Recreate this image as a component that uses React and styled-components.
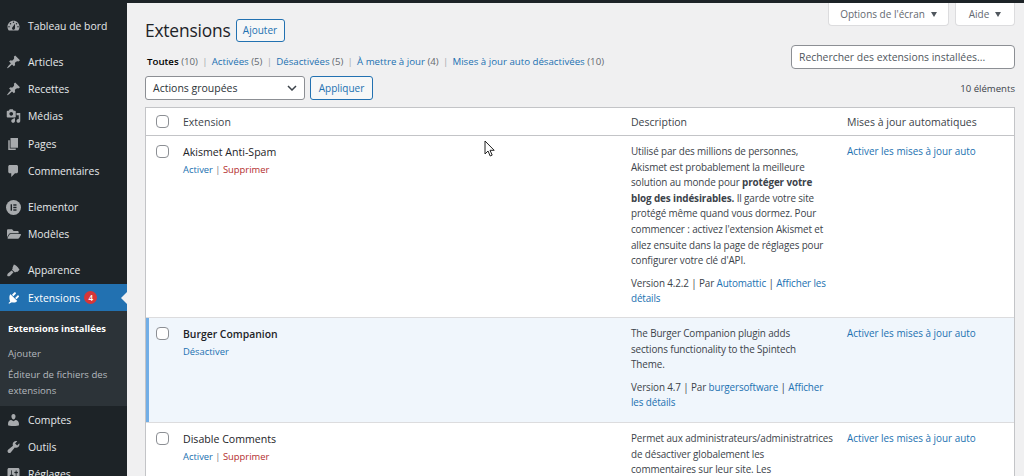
import * as React from "react"
import styled, { createGlobalStyle } from "styled-components"
import { FaFolderOpen } from "react-icons/fa"

const GlobalStyle = createGlobalStyle`
  html, body {
    margin: 0;
    padding: 0;
    height: 100%;
    overflow: hidden;
    background: #f0f0f1;
  }
  body {
    font-family: "Open Sans", "Liberation Sans", sans-serif;
    font-size: 10px;
    color: #3c434a;
  }
  * { box-sizing: border-box; }
`

const Page = styled.div`
  display: flex;
  flex-direction: column;
  height: 476px;
  width: 1024px;
  overflow: hidden;
  position: relative;
`

const TopBar = styled.div`
  height: 3px;
  flex: none;
  background: #1d2327;
`

const Body = styled.div`
  display: flex;
  flex: 1;
  min-height: 0;
`

const Sidebar = styled.nav`
  width: 127px;
  flex: none;
  background: #1d2327;
  padding-top: 9px;
  overflow: hidden;
`

const MenuItem = styled.div`
  display: flex;
  align-items: center;
  height: 27.4px;
  padding-left: 6px;
  gap: 7px;
  font-size: 10.4px;
  color: ${p => (p.$active ? "#fff" : "#e6e9eb")};
  background: ${p => (p.$active ? "#2271b1" : "transparent")};
  position: relative;
  margin-top: ${p => (p.$gap ? "8.5px" : "0")};
`

const MenuIcon = styled.span`
  width: 15px;
  height: 15px;
  flex: none;
  display: flex;
  align-items: center;
  justify-content: center;
  color: ${p => (p.$active ? "#fff" : "#a7aaad")};
`

const Badge = styled.span`
  width: 13px;
  height: 13px;
  border-radius: 50%;
  background: #d63638;
  color: #fff;
  font-size: 8px;
  font-weight: 600;
  display: flex;
  align-items: center;
  justify-content: center;
  margin-left: -3px;
`

const ActiveArrow = styled.span`
  position: absolute;
  right: 0;
  top: 50%;
  margin-top: -6px;
  border: 6px solid transparent;
  border-right-color: #f0f0f1;
  border-left: 0;
`

const Submenu = styled.div`
  background: #2c3338;
  padding: 6px 8px 6px;
  height: 94.5px;
  display: flex;
  flex-direction: column;
`

const SubItem = styled.div`
  font-size: ${p => (p.$current ? 9.4 : 9.6)}px;
  line-height: 15.5px;
  padding: ${p => (p.$current ? "4px 0 6px" : "3px 0 3px")};
  color: ${p => (p.$current ? "#fff" : "#b4b9be")};
  font-weight: ${p => (p.$current ? 700 : 400)};
`

const Main = styled.main`
  flex: 1;
  min-width: 0;
  padding: 0 9px 0 18px;
  position: relative;
`

const ScreenTabs = styled.div`
  display: flex;
  justify-content: flex-end;
  gap: 6px;
  height: 23px;
`

const ScreenTab = styled.div`
  width: ${p => p.$w}px;
  height: 23px;
  background: #fff;
  border: 1px solid #dcdcde;
  border-top: 0;
  border-radius: 0 0 4px 4px;
  display: flex;
  align-items: center;
  justify-content: center;
  gap: 6px;
  font-size: 10px;
  color: #646970;
`

const Caret = styled.span`
  width: 0;
  height: 0;
  border-left: 3.5px solid transparent;
  border-right: 3.5px solid transparent;
  border-top: 5px solid #50575e;
`

const TitleRow = styled.div`
  display: flex;
  align-items: center;
  gap: 5px;
  height: 24px;
  margin-top: -8px;
`

const Title = styled.h1`
  margin: 0;
  font-size: 17.4px;
  font-weight: 400;
  color: #1d2327;
  letter-spacing: -0.2px;
`

const OutlineButton = styled.button`
  height: ${p => p.$h || 24}px;
  width: ${p => p.$w}px;
  padding: 0;
  background: #f6f7f7;
  border: 1px solid #2271b1;
  border-radius: 3px;
  color: #2271b1;
  font-family: inherit;
  font-size: 10px;
  flex: none;
`

const FilterRow = styled.div`
  display: flex;
  justify-content: space-between;
  align-items: flex-start;
  height: 34px;
`

const Filters = styled.div`
  margin-top: 13px;
  margin-left: 2px;
  display: flex;
  gap: 4.2px;
  font-size: 9.7px;
  color: #646970;
  line-height: 14px;
`

const FilterLink = styled.span`
  color: ${p => (p.$current ? "#000" : "#2271b1")};
  font-weight: ${p => (p.$current ? 600 : 400)};
`

const Sep = styled.span`
  color: #a7aaad;
`

const SearchBox = styled.div`
  width: 224px;
  height: 24px;
  margin-top: 3px;
  background: #fff;
  border: 1px solid #8c8f94;
  border-radius: 4px;
  display: flex;
  align-items: center;
  padding-left: 7px;
  font-size: 10.4px;
  color: #50575e;
`

const ActionRow = styled.div`
  display: flex;
  align-items: center;
  gap: 5px;
  height: 24px;
  margin-bottom: 7px;
`

const BulkSelect = styled.div`
  width: 160px;
  height: 24px;
  background: #fff;
  border: 1px solid #8c8f94;
  border-radius: 3px;
  display: flex;
  align-items: center;
  justify-content: space-between;
  padding: 0 7px;
  font-size: 10.5px;
  color: #2c3338;
`

const Count = styled.div`
  margin-left: auto;
  font-size: 9.6px;
  color: #3c434a;
`

const Table = styled.div`
  background: #fff;
  border: 1px solid #c3c4c7;
  border-bottom: 0;
`

const Row = styled.div`
  display: grid;
  grid-template-columns: 37px 448px 216px 1fr;
  background: ${p => (p.$active ? "#f0f6fc" : "#fff")};
  border-bottom: 1px solid ${p => (p.$head ? "#c3c4c7" : "#dcdcde")};
  box-shadow: ${p => (p.$active ? "inset 3px 0 0 #72aee6" : "none")};
  height: ${p => p.$h}px;
  overflow: ${p => (p.$clip ? "hidden" : "visible")};
`

const Cell = styled.div`
  padding-top: 8px;
  font-size: 9.9px;
  line-height: 15.6px;
  color: #3c434a;
`

const DescCell = styled(Cell)`
  letter-spacing: -0.12px;
`

const HeadCell = styled.div`
  display: flex;
  align-items: center;
  font-size: 10.5px;
  color: #3c434a;
`

const CheckCell = styled.div`
  padding: ${p => (p.$head ? 7 : 9)}px 0 0 10px;
`

const Check = styled.span`
  display: block;
  width: 13px;
  height: 13px;
  background: #fff;
  border: 1px solid #8c8f94;
  border-radius: 4px;
`

const PluginName = styled.div`
  font-size: ${p => (p.$active ? 10.4 : 10.6)}px;
  line-height: 15px;
  margin-top: 1px;
  color: #1d2327;
  font-weight: ${p => (p.$active ? 600 : 400)};
`

const RowActions = styled.div`
  margin-top: 3px;
  font-size: 9.4px;
  line-height: 14px;
  color: #787c82;
`

const Link = styled.span`
  color: ${p => (p.$danger ? "#b32d2e" : "#2271b1")};
`

const Paragraph = styled.p`
  margin: 0 0 7px;
`

const Cursor = styled.svg`
  position: absolute;
  left: 484px;
  top: 140px;
  width: 13px;
  height: 17px;
`

// wp-admin menu glyphs, drawn on a 20 unit grid
const paths = {
  dashboard: "M3.76 16h12.48c1.1-1.37 1.76-3.11 1.76-5 0-4.42-3.58-8-8-8s-8 3.58-8 8c0 1.89.66 3.63 1.76 5zM10 4c.55 0 1 .45 1 1s-.45 1-1 1-1-.45-1-1 .45-1 1-1zM6 6c.55 0 1 .45 1 1s-.45 1-1 1-1-.45-1-1 .45-1 1-1zm8 0c.55 0 1 .45 1 1s-.45 1-1 1-1-.45-1-1 .45-1 1-1zm-5.37 5.55L12 7v6c0 1.1-.9 2-2 2s-2-.9-2-2c0-.57.24-1.08.63-1.45zM4 10c.55 0 1 .45 1 1s-.45 1-1 1-1-.45-1-1 .45-1 1-1zm12 0c.55 0 1 .45 1 1s-.45 1-1 1-1-.45-1-1 .45-1 1-1z",
  pin: "M10.44 3.02l1.82-1.82 6.36 6.35-1.83 1.82c-1.05-.68-2.48-.57-3.41.36l-.75.75c-.92.93-1.04 2.35-.35 3.41l-1.83 1.82-2.41-2.41-2.8 2.79c-.42.42-3.38 2.71-3.8 2.29s1.86-3.39 2.28-3.81l2.79-2.79L4.1 9.36l1.83-1.82c1.05.69 2.48.57 3.41-.36l.75-.75c.93-.92 1.04-2.35.35-3.41z",
  media: "M13 11V4c0-.55-.45-1-1-1h-1.67L9 1H5L3.67 3H2c-.55 0-1 .45-1 1v7c0 .55.45 1 1 1h10c.55 0 1-.45 1-1zM7 4.5c1.38 0 2.5 1.12 2.5 2.5S8.38 9.5 7 9.5 4.5 8.38 4.5 7 5.62 4.5 7 4.5zM14 6h5v10.5c0 1.38-1.12 2.5-2.5 2.5S14 17.88 14 16.5s1.12-2.5 2.5-2.5c.17 0 .34.02.5.05V9h-3V6zm-4 8.05V13h2v3.5c0 1.38-1.12 2.5-2.5 2.5S7 17.88 7 16.5 8.12 14 9.5 14c.17 0 .34.02.5.05z",
  pages: "M6 15V2h10v13H6zm-1 1h8v2H3V5h2v11z",
  comment: "M5 2h9c1.1 0 2 .9 2 2v7c0 1.1-.9 2-2 2h-2l-5 5v-5H5c-1.1 0-2-.9-2-2V4c0-1.1.9-2 2-2z",
  brush: "M10.5 2.5c2 .5 5 2.5 7.5 7l-3 3c-1-.2-2 0-3 .8L8 9.5c.8-1 1-2 .8-3zM7.5 10.5l2.5 2.5-4.5 4.5c-1 1-2.8 1.2-3.500.5s-.4-2.500.5-3.500z",
  plugin: "M13.11 4.36L9.87 7.6 8 5.73l3.24-3.24c.35-.34 1.05-.2 1.56.32.52.51.66 1.21.31 1.55zM5.11 6.13l.91-1.12 9.01 9.01-1.19.84c-1.5 1.2-4 1.7-6 .7L4.69 17.47c-.28.29-.74.29-1.03 0-.28-.28-.28-.74 0-1.02L5.6 14.5C4.4 12.5 4 8.5 5.11 6.13zM12.13 9.87l3.24-3.24c.34-.35 1.04-.21 1.55.31.52.51.66 1.21.31 1.55L14 11.73z",
  users: "M10 9.25c-2.27 0-2.73-3.44-2.73-3.44C7 4.02 7.82 2 9.97 2c2.16 0 2.98 2.02 2.71 3.81 0 0-.41 3.44-2.68 3.44zm0 2.57L12.72 10c2.39 0 4.52 2.33 4.52 4.53v2.49s-3.65 1.13-7.24 1.13c-3.65 0-7.24-1.13-7.24-1.13v-2.49c0-2.25 1.94-4.48 4.15-4.48z",
  tools: "M16.68 9.77c-1.34 1.34-3.3 1.67-4.95.99l-5.41 6.52c-.99.99-2.59.99-3.57 0-.99-.98-.99-2.58 0-3.57l6.52-5.42c-.68-1.65-.35-3.61.99-4.95 1.28-1.28 3.12-1.62 4.72-1.06l-2.89 2.89 2.82 2.82 2.86-2.87c.53 1.58.19 3.4-1.1 4.68z",
  settings: "M18 16V4c0-1.1-.9-2-2-2H4c-1.1 0-2 .9-2 2v12c0 1.1.9 2 2 2h12c1.1 0 2-.9 2-2zM8 11h1c.55 0 1 .45 1 1s-.45 1-1 1H8v1.5c0 .28-.22.5-.5.5s-.5-.22-.5-.5V13H6c-.55 0-1-.45-1-1s.45-1 1-1h1V5.5c0-.28.22-.5.5-.5s.5.22.5.5V11zm5-2h-1c-.55 0-1-.45-1-1s.45-1 1-1h1V5.5c0-.28.22-.5.5-.5s.5.22.5.5V7h1c.55 0 1 .45 1 1s-.45 1-1 1h-1v5.5c0 .28-.22.5-.5.5s-.5-.22-.5-.5V9z",
}

const DashIcon = ({ name }) => (
  <svg width="16" height="16" viewBox="0 0 20 20" fill="currentColor">
    <path fillRule="evenodd" d={paths[name]} />
  </svg>
)

const ElementorIcon = () => (
  <svg width="15" height="15" viewBox="0 0 14 14">
    <circle cx="7" cy="7" r="7" fill="currentColor" />
    <rect x="4.3" y="4" width="1.3" height="6" fill="#1d2327" />
    <rect x="6.8" y="4" width="3" height="1.3" fill="#1d2327" />
    <rect x="6.8" y="6.35" width="3" height="1.3" fill="#1d2327" />
    <rect x="6.8" y="8.7" width="3" height="1.3" fill="#1d2327" />
  </svg>
)

const menuTop = [
  { label: "Tableau de bord", icon: <DashIcon name="dashboard" /> },
  { label: "Articles", icon: <DashIcon name="pin" />, gap: true },
  { label: "Recettes", icon: <DashIcon name="pin" /> },
  { label: "Médias", icon: <DashIcon name="media" /> },
  { label: "Pages", icon: <DashIcon name="pages" /> },
  { label: "Commentaires", icon: <DashIcon name="comment" /> },
  { label: "Elementor", icon: <ElementorIcon />, gap: true },
  { label: "Modèles", icon: <FaFolderOpen size={14} /> },
  { label: "Apparence", icon: <DashIcon name="brush" />, gap: true },
]

const menuBottom = [
  { label: "Comptes", icon: <DashIcon name="users" /> },
  { label: "Outils", icon: <DashIcon name="tools" /> },
  { label: "Réglages", icon: <DashIcon name="settings" /> },
]

const Nav = ({ item }) => (
  <MenuItem $gap={item.gap}>
    <MenuIcon>{item.icon}</MenuIcon>
    {item.label}
  </MenuItem>
)

const AUTO_LINK = "Activer les mises à jour auto"

const App = () => (
  <Page>
    <GlobalStyle />
    <TopBar />
    <Body>
      <Sidebar>
        {menuTop.map(item => <Nav key={item.label} item={item} />)}
        <MenuItem $active>
          <MenuIcon $active><DashIcon name="plugin" /></MenuIcon>
          Extensions
          <Badge>4</Badge>
          <ActiveArrow />
        </MenuItem>
        <Submenu>
          <SubItem $current>Extensions installées</SubItem>
          <SubItem>Ajouter</SubItem>
          <SubItem>Éditeur de fichiers des extensions</SubItem>
        </Submenu>
        {menuBottom.map(item => <Nav key={item.label} item={item} />)}
      </Sidebar>
      <Main>
        <ScreenTabs>
          <ScreenTab $w={121}>Options de l'écran <Caret /></ScreenTab>
          <ScreenTab $w={60}>Aide <Caret /></ScreenTab>
        </ScreenTabs>
        <TitleRow>
          <Title>Extensions</Title>
          <OutlineButton $w={49} $h={23}>Ajouter</OutlineButton>
        </TitleRow>
        <FilterRow>
          <Filters>
            <span><FilterLink $current>Toutes</FilterLink> (10)</span><Sep>|</Sep>
            <span><FilterLink>Activées</FilterLink> (5)</span><Sep>|</Sep>
            <span><FilterLink>Désactivées</FilterLink> (5)</span><Sep>|</Sep>
            <span><FilterLink>À mettre à jour</FilterLink> (4)</span><Sep>|</Sep>
            <span><FilterLink>Mises à jour auto désactivées</FilterLink> (10)</span>
          </Filters>
          <SearchBox>Rechercher des extensions installées...</SearchBox>
        </FilterRow>
        <ActionRow>
          <BulkSelect>
            Actions groupées
            <svg width="10" height="6" viewBox="0 0 10 6" fill="none" stroke="#3c434a" strokeWidth="1.5">
              <path d="M1 1l4 4 4-4" />
            </svg>
          </BulkSelect>
          <OutlineButton $w={63}>Appliquer</OutlineButton>
          <Count>10 éléments</Count>
        </ActionRow>
        <Table>
          <Row $head $h={28}>
            <CheckCell $head><Check /></CheckCell>
            <HeadCell>Extension</HeadCell>
            <HeadCell>Description</HeadCell>
            <HeadCell>Mises à jour automatiques</HeadCell>
          </Row>
          <Row $h={182}>
            <CheckCell><Check /></CheckCell>
            <Cell>
              <PluginName>Akismet Anti-Spam</PluginName>
              <RowActions><Link>Activer</Link> | <Link $danger>Supprimer</Link></RowActions>
            </Cell>
            <DescCell>
              <Paragraph>
                Utilisé par des millions de personnes,<br />
                Akismet est probablement la meilleure<br />
                solution au monde pour <b>protéger votre<br />
                blog des indésirables.</b> Il garde votre site<br />
                protégé même quand vous dormez. Pour<br />
                commencer : activez l'extension Akismet et<br />
                allez ensuite dans la page de réglages pour<br />
                configurer votre clé d'API.
              </Paragraph>
              Version 4.2.2 | Par <Link>Automattic</Link> | <Link>Afficher les<br />détails</Link>
            </DescCell>
            <Cell><Link>{AUTO_LINK}</Link></Cell>
          </Row>
          <Row $active $h={105}>
            <CheckCell><Check /></CheckCell>
            <Cell>
              <PluginName $active>Burger Companion</PluginName>
              <RowActions><Link>Désactiver</Link></RowActions>
            </Cell>
            <DescCell>
              <Paragraph>
                The Burger Companion plugin adds<br />
                sections functionality to the Spintech<br />
                Theme.
              </Paragraph>
              Version 4.7 | Par <Link>burgersoftware</Link> | <Link>Afficher<br />les détails</Link>
            </DescCell>
            <Cell><Link>{AUTO_LINK}</Link></Cell>
          </Row>
          <Row $h={120} $clip>
            <CheckCell><Check /></CheckCell>
            <Cell>
              <PluginName>Disable Comments</PluginName>
              <RowActions><Link>Activer</Link> | <Link $danger>Supprimer</Link></RowActions>
            </Cell>
            <DescCell>
              Permet aux administrateurs/administratrices<br />
              de désactiver globalement les<br />
              commentaires sur leur site. Les
            </DescCell>
            <Cell><Link>{AUTO_LINK}</Link></Cell>
          </Row>
        </Table>
      </Main>
    </Body>
    <Cursor viewBox="0 0 13 17">
      <path d="M1 1v13l3-3 2.2 5 2-.9L6 10.3h4.2z" fill="#fff" stroke="#222" strokeWidth="1" />
    </Cursor>
  </Page>
)

export default App
